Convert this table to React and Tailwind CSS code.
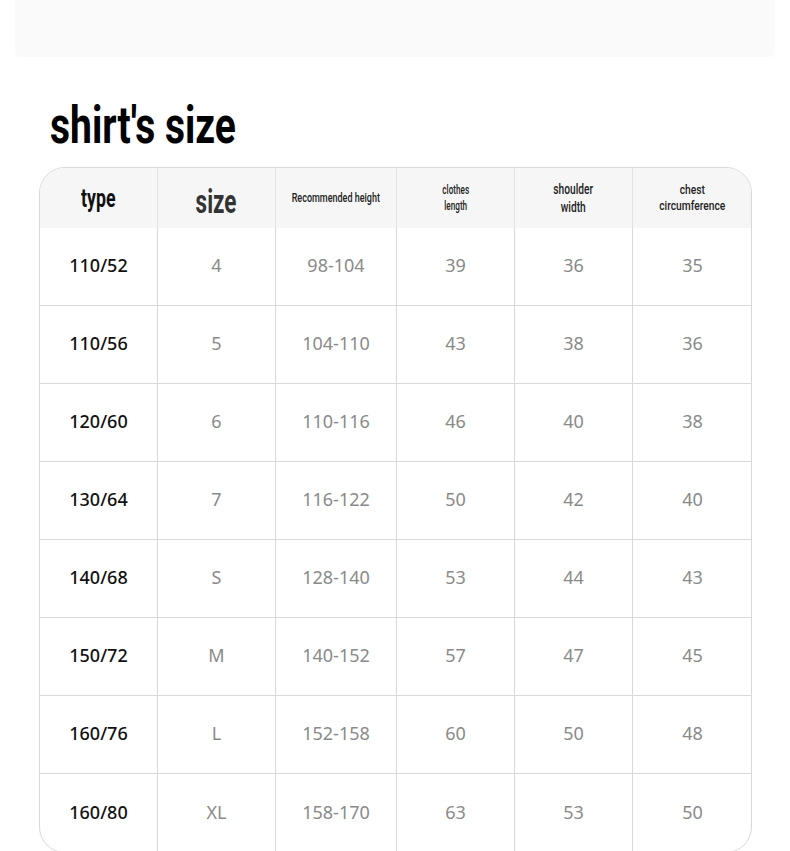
import React from "react";

const rows = [
  ["110/52", "4", "98-104", "39", "36", "35"],
  ["110/56", "5", "104-110", "43", "38", "36"],
  ["120/60", "6", "110-116", "46", "40", "38"],
  ["130/64", "7", "116-122", "50", "42", "40"],
  ["140/68", "S", "128-140", "53", "44", "43"],
  ["150/72", "M", "140-152", "57", "47", "45"],
  ["160/76", "L", "152-158", "60", "50", "48"],
  ["160/80", "XL", "158-170", "63", "53", "50"],
];

// narrow header type, the screenshot uses a condensed face
const Narrow = ({ className, children }) => (
  <span
    className={"inline-block scale-x-[0.68] font-['Roboto',sans-serif] " + className}
  >
    {children}
  </span>
);

const App = () => {
  return (
    <div className="w-[790px] h-[851px] bg-white overflow-hidden relative">
      {/* bande grise du haut */}
      <div className="mx-[15px] h-[57px] bg-[#fafafa] rounded-b-md" />

      <div className="pl-[50px] pt-[43px] h-[110px]">
        <Narrow className="origin-left text-[52px] leading-[52px] font-bold text-black scale-x-[0.75]">
          shirt's size
        </Narrow>
      </div>

      <div className="ml-[39px] w-[713px] rounded-[26px] border border-[#d9d9d9] overflow-hidden">
        <div className="grid grid-cols-[118px_118px_121px_118px_118px_119px] bg-[#f6f6f6] h-[60px]">
          <div className="flex items-center justify-center border-r border-[#e2e2e2]">
            <Narrow className="text-[26px] font-bold text-[#111]">type</Narrow>
          </div>
          <div className="flex items-center justify-center border-r border-[#e2e2e2] pt-[8px]">
            <Narrow className="text-[33px] font-bold text-[#333]">size</Narrow>
          </div>
          <div className="flex items-center justify-center border-r border-[#e2e2e2]">
            <Narrow className="text-[12px] font-medium text-[#222] whitespace-nowrap scale-x-[0.75]">
              Recommended height
            </Narrow>
          </div>
          <div className="flex items-center justify-center border-r border-[#e2e2e2]">
            <Narrow className="text-[12px] leading-[16px] font-medium text-[#222] text-center scale-x-[0.8]">
              clothes
              <br />
              length
            </Narrow>
          </div>
          <div className="flex items-center justify-center border-r border-[#e2e2e2]">
            <Narrow className="text-[15px] leading-[18px] font-medium text-[#222] text-center scale-x-[0.8]">
              shoulder
              <br />
              width
            </Narrow>
          </div>
          <div className="flex items-center justify-center">
            <Narrow className="text-[12.5px] leading-[16px] font-medium text-[#222] text-center scale-x-[0.82]">
              chest
              <br />
              circumference
            </Narrow>
          </div>
        </div>

        {rows.map((r, i) => (
          <div
            key={i}
            className={
              "grid grid-cols-[118px_118px_121px_118px_118px_119px] h-[78px] font-['Noto_Sans',sans-serif] text-[18px] " +
              (i < rows.length - 1 ? "border-b border-[#d9d9d9]" : "")
            }
          >
            {r.map((v, j) => (
              <div
                key={j}
                className={
                  "flex items-center justify-center pb-[2px] " +
                  (j < 5 ? "border-r border-[#d9d9d9] " : "") +
                  (j === 0 ? "text-[#111] font-medium" : "text-[#8a8a8a]")
                }
              >
                {v}
              </div>
            ))}
          </div>
        ))}
      </div>
    </div>
  );
};

export default App;
